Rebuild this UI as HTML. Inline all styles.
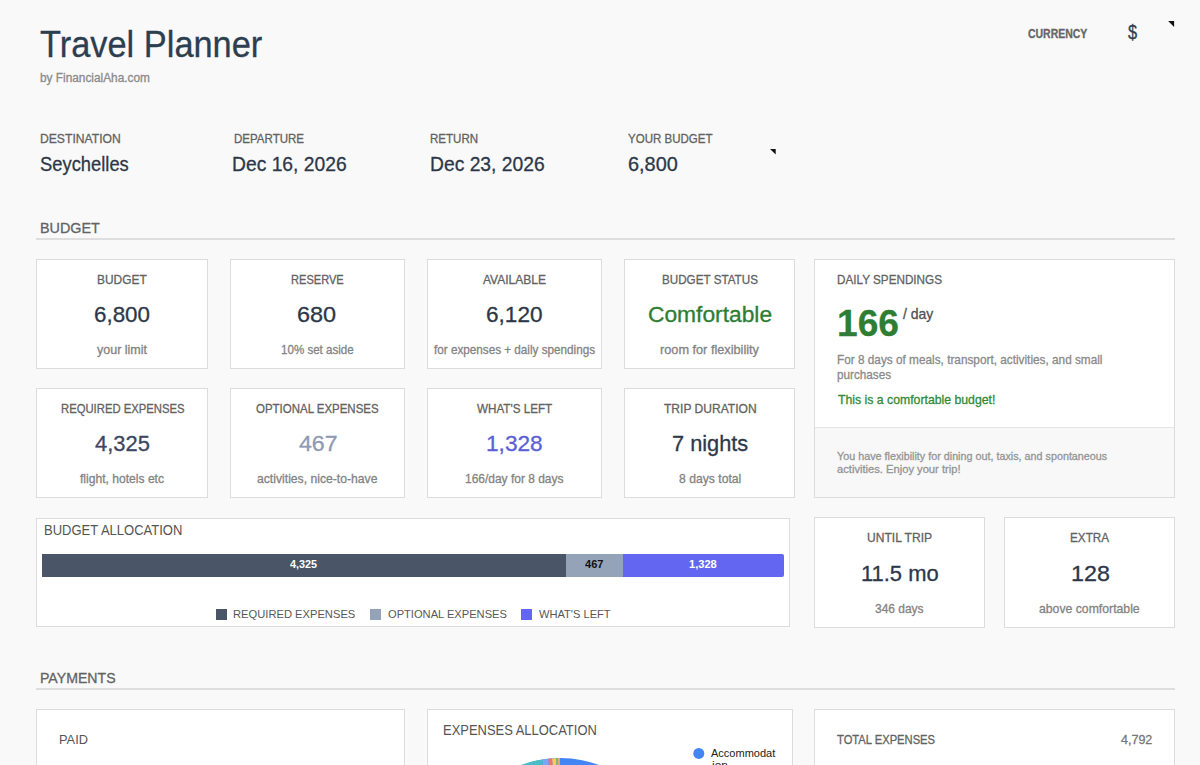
<!DOCTYPE html><html lang="en"><head><meta charset="utf-8"><title>Travel Planner</title><style>
html,body{margin:0;padding:0}
body{width:1200px;height:765px;overflow:hidden;background:#f9f9f9;font-family:"Liberation Sans",sans-serif;position:relative}
.card{position:absolute;box-sizing:border-box;background:#fff;border:1px solid #dcdcdc}
.t{position:absolute;white-space:nowrap;line-height:1;display:block;transform-origin:0 0}
.root{position:absolute;left:0;top:0;width:1200px;height:765px;overflow:hidden}
</style></head><body><div class="root">
<div class="card" style="left:36px;top:259px;width:172px;height:110px"></div>
<div class="card" style="left:230px;top:259px;width:175px;height:110px"></div>
<div class="card" style="left:427px;top:259px;width:175px;height:110px"></div>
<div class="card" style="left:624px;top:259px;width:171px;height:110px"></div>
<div class="card" style="left:36px;top:388px;width:172px;height:110px"></div>
<div class="card" style="left:230px;top:388px;width:175px;height:110px"></div>
<div class="card" style="left:427px;top:388px;width:175px;height:110px"></div>
<div class="card" style="left:624px;top:388px;width:171px;height:110px"></div>
<div class="card" style="left:814px;top:517px;width:171px;height:111px"></div>
<div class="card" style="left:1004px;top:517px;width:171px;height:111px"></div>
<div class="card" style="left:814px;top:259px;width:361px;height:239px"></div><div style="position:absolute;left:815px;top:427px;width:359px;height:69px;background:#f8f8f8;border-top:1px solid #e4e4e4"></div><div class="card" style="left:36px;top:518px;width:754px;height:109px"></div><div style="position:absolute;left:42px;top:554px;width:524px;height:23px;background:#4a5568"></div><div style="position:absolute;left:566px;top:554px;width:57px;height:23px;background:#94a3b8"></div><div style="position:absolute;left:623px;top:554px;width:161px;height:23px;background:#6366f1;border-radius:0 2px 2px 0"></div><div style="position:absolute;left:216px;top:609px;width:11px;height:11px;background:#4a5568"></div><div style="position:absolute;left:370px;top:609px;width:11px;height:11px;background:#94a3b8"></div><div style="position:absolute;left:521px;top:609px;width:11px;height:11px;background:#6366f1"></div><div class="card" style="left:36px;top:709px;width:369px;height:80px"></div><div class="card" style="left:427px;top:709px;width:366px;height:80px"></div><div class="card" style="left:814px;top:709px;width:361px;height:80px"></div><svg style="position:absolute;left:427px;top:710px" width="366" height="60" viewBox="427 710 366 60">
<circle cx="698.8" cy="753.4" r="5.5" fill="#4285f4"/>
<g transform="translate(560.3,870.6)">
<circle r="112.5" fill="#4285f4"/>
<path d="M0,0 L-0.50,-112.50 A112.5,112.5 0 0,0 -2.30,-112.48 Z" fill="#f6ae6a"/>
<path d="M0,0 L-2.30,-112.48 A112.5,112.5 0 0,0 -4.30,-112.42 Z" fill="#7cb877"/>
<path d="M0,0 L-4.30,-112.42 A112.5,112.5 0 0,0 -8.30,-112.19 Z" fill="#fbc95a"/>
<path d="M0,0 L-8.30,-112.19 A112.5,112.5 0 0,0 -12.30,-111.83 Z" fill="#e8766d"/>
<path d="M0,0 L-12.30,-111.83 A112.5,112.5 0 0,0 -18.30,-111.00 Z" fill="#78a8f5"/>
<path d="M0,0 L-18.30,-111.00 A112.5,112.5 0 0,0 -60.00,-95.16 Z" fill="#46bdc6"/>
<path d="M0,0 L-60.00,-95.16 A112.5,112.5 0 0,0 -112.00,-10.59 Z" fill="#46bdc6"/>
</g></svg><svg style="position:absolute;left:1168px;top:20px" width="7" height="8"><path d="M0.1,1.1 L6.1,1.1 L6.1,7.0 Z" fill="#111"/></svg><svg style="position:absolute;left:770px;top:148px" width="7" height="7"><path d="M0,1 L5.7,1 L5.7,6.5 Z" fill="#111"/></svg><div style="position:absolute;left:36px;top:238px;width:1139px;height:2px;background:#dedede"></div><div style="position:absolute;left:36px;top:688px;width:1139px;height:2px;background:#dedede"></div>
<span class="t" style="left:39.72px;top:26.98px;font-size:36.5px;color:#2c3e50;-webkit-text-stroke:0.3px;transform:scaleX(0.9420);">Travel Planner</span>
<span class="t" style="left:39.99px;top:72.47px;font-size:12.5px;color:#8a8a8a;-webkit-text-stroke:0.3px;transform:scaleX(0.9477);">by FinancialAha.com</span>
<span class="t" style="left:1027.53px;top:27.80px;font-size:12px;color:#666;font-weight:700;-webkit-text-stroke:0.3px;transform:scaleX(0.8718);">CURRENCY</span>
<span class="t" style="left:1127.74px;top:23.43px;font-size:19.5px;color:#2c3e50;-webkit-text-stroke:0.3px;transform:scaleX(0.8379);">$</span>
<span class="t" style="left:40.11px;top:132.25px;font-size:13px;color:#626262;-webkit-text-stroke:0.3px;transform:scaleX(0.9344);">DESTINATION</span>
<span class="t" style="left:39.53px;top:152.85px;font-size:21px;color:#2d3748;-webkit-text-stroke:0.3px;transform:scaleX(0.8743);">Seychelles</span>
<span class="t" style="left:233.78px;top:132.25px;font-size:13px;color:#626262;-webkit-text-stroke:0.3px;transform:scaleX(0.8871);">DEPARTURE</span>
<span class="t" style="left:232.28px;top:152.85px;font-size:21px;color:#2d3748;-webkit-text-stroke:0.3px;transform:scaleX(0.9179);">Dec 16, 2026</span>
<span class="t" style="left:430.34px;top:132.25px;font-size:13px;color:#626262;-webkit-text-stroke:0.3px;transform:scaleX(0.8891);">RETURN</span>
<span class="t" style="left:429.66px;top:152.85px;font-size:21px;color:#2d3748;-webkit-text-stroke:0.3px;transform:scaleX(0.9179);">Dec 23, 2026</span>
<span class="t" style="left:627.82px;top:132.25px;font-size:13px;color:#626262;-webkit-text-stroke:0.3px;transform:scaleX(0.8869);">YOUR BUDGET</span>
<span class="t" style="left:627.54px;top:152.85px;font-size:21px;color:#2d3748;-webkit-text-stroke:0.3px;transform:scaleX(0.9471);">6,800</span>
<span class="t" style="left:39.69px;top:219.61px;font-size:15.4px;color:#636363;-webkit-text-stroke:0.3px;transform:scaleX(0.9332);">BUDGET</span>
<span class="t" style="left:39.71px;top:670.31px;font-size:15.4px;color:#636363;-webkit-text-stroke:0.3px;transform:scaleX(0.9173);">PAYMENTS</span>
<span class="t" style="left:97.00px;top:274.12px;font-size:12.8px;color:#626262;-webkit-text-stroke:0.3px;transform:scaleX(0.9312);">BUDGET</span>
<span class="t" style="left:93.63px;top:303.57px;font-size:22.5px;color:#2d3748;-webkit-text-stroke:0.3px;transform:scaleX(0.9940);">6,800</span>
<span class="t" style="left:96.98px;top:344.12px;font-size:12.8px;color:#838383;-webkit-text-stroke:0.3px;transform:scaleX(0.9774);">your limit</span>
<span class="t" style="left:290.61px;top:274.12px;font-size:12.8px;color:#626262;-webkit-text-stroke:0.3px;transform:scaleX(0.8653);">RESERVE</span>
<span class="t" style="left:297.24px;top:303.57px;font-size:22.5px;color:#2d3748;-webkit-text-stroke:0.3px;transform:scaleX(1.0424);">680</span>
<span class="t" style="left:280.97px;top:344.12px;font-size:12.8px;color:#838383;-webkit-text-stroke:0.3px;transform:scaleX(0.9047);">10% set aside</span>
<span class="t" style="left:483.18px;top:274.12px;font-size:12.8px;color:#626262;-webkit-text-stroke:0.3px;transform:scaleX(0.9383);">AVAILABLE</span>
<span class="t" style="left:486.45px;top:303.57px;font-size:22.5px;color:#2d3748;-webkit-text-stroke:0.3px;transform:scaleX(1.0034);">6,120</span>
<span class="t" style="left:434.37px;top:344.12px;font-size:12.8px;color:#838383;-webkit-text-stroke:0.3px;transform:scaleX(0.9146);">for expenses + daily spendings</span>
<span class="t" style="left:661.60px;top:274.12px;font-size:12.8px;color:#626262;-webkit-text-stroke:0.3px;transform:scaleX(0.9114);">BUDGET STATUS</span>
<span class="t" style="left:647.86px;top:303.57px;font-size:22.5px;color:#2e7d32;-webkit-text-stroke:0.3px;transform:scaleX(1.0125);">Comfortable</span>
<span class="t" style="left:660.08px;top:344.12px;font-size:12.8px;color:#838383;-webkit-text-stroke:0.3px;transform:scaleX(0.9940);">room for flexibility</span>
<span class="t" style="left:60.59px;top:403.12px;font-size:12.8px;color:#626262;-webkit-text-stroke:0.3px;transform:scaleX(0.8821);">REQUIRED EXPENSES</span>
<span class="t" style="left:94.70px;top:432.57px;font-size:22.5px;color:#3d4660;-webkit-text-stroke:0.3px;transform:scaleX(0.9735);">4,325</span>
<span class="t" style="left:80.35px;top:473.12px;font-size:12.8px;color:#838383;-webkit-text-stroke:0.3px;transform:scaleX(0.9449);">flight, hotels etc</span>
<span class="t" style="left:256.19px;top:403.12px;font-size:12.8px;color:#626262;-webkit-text-stroke:0.3px;transform:scaleX(0.8964);">OPTIONAL EXPENSES</span>
<span class="t" style="left:298.69px;top:432.57px;font-size:22.5px;color:#8e99b3;-webkit-text-stroke:0.3px;transform:scaleX(1.0264);">467</span>
<span class="t" style="left:257.24px;top:473.12px;font-size:12.8px;color:#838383;-webkit-text-stroke:0.3px;transform:scaleX(0.9516);">activities, nice-to-have</span>
<span class="t" style="left:477.10px;top:403.12px;font-size:12.8px;color:#626262;-webkit-text-stroke:0.3px;transform:scaleX(0.9104);">WHAT'S LEFT</span>
<span class="t" style="left:486.07px;top:432.57px;font-size:22.5px;color:#5b5fd6;-webkit-text-stroke:0.3px;transform:scaleX(1.0065);">1,328</span>
<span class="t" style="left:464.96px;top:473.12px;font-size:12.8px;color:#838383;-webkit-text-stroke:0.3px;transform:scaleX(0.9351);">166/day for 8 days</span>
<span class="t" style="left:663.64px;top:403.12px;font-size:12.8px;color:#626262;-webkit-text-stroke:0.3px;transform:scaleX(0.9418);">TRIP DURATION</span>
<span class="t" style="left:671.72px;top:432.57px;font-size:22.5px;color:#2d3748;-webkit-text-stroke:0.3px;transform:scaleX(0.9676);">7 nights</span>
<span class="t" style="left:678.70px;top:473.12px;font-size:12.8px;color:#838383;-webkit-text-stroke:0.3px;transform:scaleX(0.9520);">8 days total</span>
<span class="t" style="left:866.68px;top:532.12px;font-size:12.8px;color:#626262;-webkit-text-stroke:0.3px;transform:scaleX(0.9429);">UNTIL TRIP</span>
<span class="t" style="left:861.39px;top:563.08px;font-size:22.5px;color:#2d3748;-webkit-text-stroke:0.3px;transform:scaleX(0.9751);">11.5 mo</span>
<span class="t" style="left:875.47px;top:602.82px;font-size:12.8px;color:#838383;-webkit-text-stroke:0.3px;transform:scaleX(0.9351);">346 days</span>
<span class="t" style="left:1070.05px;top:532.12px;font-size:12.8px;color:#626262;-webkit-text-stroke:0.3px;transform:scaleX(0.9162);">EXTRA</span>
<span class="t" style="left:1070.93px;top:563.08px;font-size:22.5px;color:#2d3748;-webkit-text-stroke:0.3px;transform:scaleX(1.0339);">128</span>
<span class="t" style="left:1039.32px;top:602.82px;font-size:12.8px;color:#838383;-webkit-text-stroke:0.3px;transform:scaleX(0.9561);">above comfortable</span>
<span class="t" style="left:836.75px;top:272.95px;font-size:13px;color:#626262;-webkit-text-stroke:0.3px;transform:scaleX(0.9008);">DAILY SPENDINGS</span>
<span class="t" style="left:837.06px;top:305.12px;font-size:37.5px;color:#2e7d32;font-weight:700;-webkit-text-stroke:0.3px;transform:scaleX(0.9907);">166</span>
<span class="t" style="left:903.48px;top:306.35px;font-size:15px;color:#505050;-webkit-text-stroke:0.3px;transform:scaleX(0.9295);">/ day</span>
<span class="t" style="left:836.87px;top:353.35px;font-size:13px;color:#8a8a8a;-webkit-text-stroke:0.3px;transform:scaleX(0.9073);">For 8 days of meals, transport, activities, and small</span>
<span class="t" style="left:836.94px;top:368.25px;font-size:13px;color:#8a8a8a;-webkit-text-stroke:0.3px;transform:scaleX(0.9011);">purchases</span>
<span class="t" style="left:837.70px;top:392.75px;font-size:13px;color:#2f8a34;-webkit-text-stroke:0.3px;transform:scaleX(0.9426);">This is a comfortable budget!</span>
<span class="t" style="left:836.75px;top:451.15px;font-size:11px;color:#959595;-webkit-text-stroke:0.3px;transform:scaleX(0.9790);">You have flexibility for dining out, taxis, and spontaneous</span>
<span class="t" style="left:837.31px;top:464.35px;font-size:11px;color:#959595;-webkit-text-stroke:0.3px;transform:scaleX(1.0152);">activities. Enjoy your trip!</span>
<span class="t" style="left:44.23px;top:524.07px;font-size:13.8px;color:#555;transform:scaleX(0.9434);">BUDGET ALLOCATION</span>
<span class="t" style="left:289.66px;top:559.23px;font-size:11.5px;color:#fff;font-weight:700;transform:scaleX(0.9416);">4,325</span>
<span class="t" style="left:585.16px;top:559.23px;font-size:11.5px;color:#111;font-weight:700;transform:scaleX(0.9612);">467</span>
<span class="t" style="left:689.06px;top:559.23px;font-size:11.5px;color:#fff;font-weight:700;transform:scaleX(0.9631);">1,328</span>
<span class="t" style="left:233.05px;top:608.73px;font-size:11.5px;color:#585858;transform:scaleX(0.9713);">REQUIRED EXPENSES</span>
<span class="t" style="left:387.91px;top:608.73px;font-size:11.5px;color:#585858;transform:scaleX(0.9675);">OPTIONAL EXPENSES</span>
<span class="t" style="left:538.84px;top:608.73px;font-size:11.5px;color:#585858;transform:scaleX(0.9654);">WHAT'S LEFT</span>
<span class="t" style="left:59.35px;top:733.25px;font-size:13px;color:#555;transform:scaleX(0.9858);">PAID</span>
<span class="t" style="left:442.75px;top:723.38px;font-size:14.5px;color:#555;transform:scaleX(0.8933);">EXPENSES ALLOCATION</span>
<span class="t" style="left:837.18px;top:733.35px;font-size:13px;color:#626262;-webkit-text-stroke:0.3px;transform:scaleX(0.8608);">TOTAL EXPENSES</span>
<span class="t" style="left:1120.99px;top:733.35px;font-size:13px;color:#777;-webkit-text-stroke:0.3px;transform:scaleX(0.9616);">4,792</span>
<span class="t" style="left:711.26px;top:748.05px;font-size:11px;color:#222;transform:scaleX(1.0004);">Accommodat</span>
<span class="t" style="left:711.67px;top:759.65px;font-size:11px;color:#222;transform:scaleX(1.0746);">ion</span>
</div></body></html>
